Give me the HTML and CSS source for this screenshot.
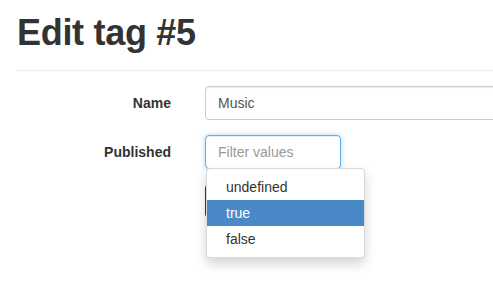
FILE: index.html
```html
<!DOCTYPE html>
<html lang="en">
<head>
<meta charset="utf-8">
<title>Edit tag #5</title>
<link rel="stylesheet" href="styles.css">
</head>
<body>
<div class="page">
  <div class="page-header">
    <h1>Edit tag #5</h1>
  </div>
  <form class="form">
    <div class="row">
      <label class="label">Name</label>
      <div class="control">
        <input class="input input-wide" type="text" value="Music">
      </div>
    </div>
    <div class="row">
      <label class="label">Published</label>
      <div class="control">
        <div class="select">
          <input class="input input-filter" type="text" placeholder="Filter values">
          <ul class="menu">
            <li class="item">undefined</li>
            <li class="item active">true</li>
            <li class="item">false</li>
          </ul>
        </div>
      </div>
    </div>
    <div class="row">
      <span class="label"></span>
      <div class="control">
        <button class="btn" type="button" aria-label="Save"></button>
      </div>
    </div>
  </form>
</div>
</body>
</html>
```
FILE: styles.css
```css
html, body {
  margin: 0;
  padding: 0;
  background: #fff;
  overflow: hidden;
}
body {
  font-family: "Liberation Sans", Arial, sans-serif;
  font-size: 14px;
  color: #333;
  width: 493px;
  height: 292px;
}
.page {
  padding-left: 16px;
  width: 477px;
  overflow: hidden;
}
.page-header {
  padding-top: 13px;
  padding-bottom: 17px;
  border-bottom: 1px solid #eee;
}
.page-header h1 {
  margin: 0;
  font-size: 36px;
  line-height: 40px;
  font-weight: 700;
  letter-spacing: -0.3px;
  color: #333;
  padding-left: 1px;
}
.form {
  margin-top: 15px;
  padding-bottom: 60px;
  display: flex;
  flex-direction: column;
  gap: 15px;
}
.row {
  display: grid;
  grid-template-columns: 155px 1fr;
  column-gap: 34px;
  align-items: center;
}
.label {
  text-align: right;
  font-weight: 700;
  font-size: 14px;
  line-height: 20px;
}
.control {
  display: flex;
}
.input {
  box-sizing: border-box;
  height: 34px;
  padding: 6px 12px;
  font-family: "Liberation Sans", Arial, sans-serif;
  font-size: 14px;
  line-height: 20px;
  color: #555;
  background: #fff;
  border: 1px solid #ccc;
  border-radius: 4px;
  box-shadow: inset 0 1px 1px rgba(0, 0, 0, 0.075);
  outline: none;
}
.input-wide {
  width: 360px;
}
.select {
  position: relative;
}
.input-filter {
  width: 136px;
  border-color: #66afe9;
  box-shadow: inset 0 1px 1px rgba(0, 0, 0, 0.075), 0 0 5px rgba(102, 175, 233, 0.55);
}
.input-filter::placeholder {
  color: #999;
}
.menu {
  position: absolute;
  top: 33px;
  left: 1px;
  z-index: 10;
  box-sizing: border-box;
  width: 159px;
  margin: 0;
  padding: 5px 0;
  list-style: none;
  background: #fff;
  border: 1px solid rgba(0, 0, 0, 0.15);
  border-radius: 4px;
  box-shadow: 0 6px 12px rgba(0, 0, 0, 0.175);
}
.item {
  padding: 3px 19px;
  line-height: 20px;
  font-size: 14px;
  color: #333;
}
.item.active {
  background: #4a89c7;
  color: #fff;
}
.btn {
  height: 34px;
  width: 70px;
  border: 1px solid #2c3e50;
  border-radius: 4px;
  background: #2c3e50;
}
```
